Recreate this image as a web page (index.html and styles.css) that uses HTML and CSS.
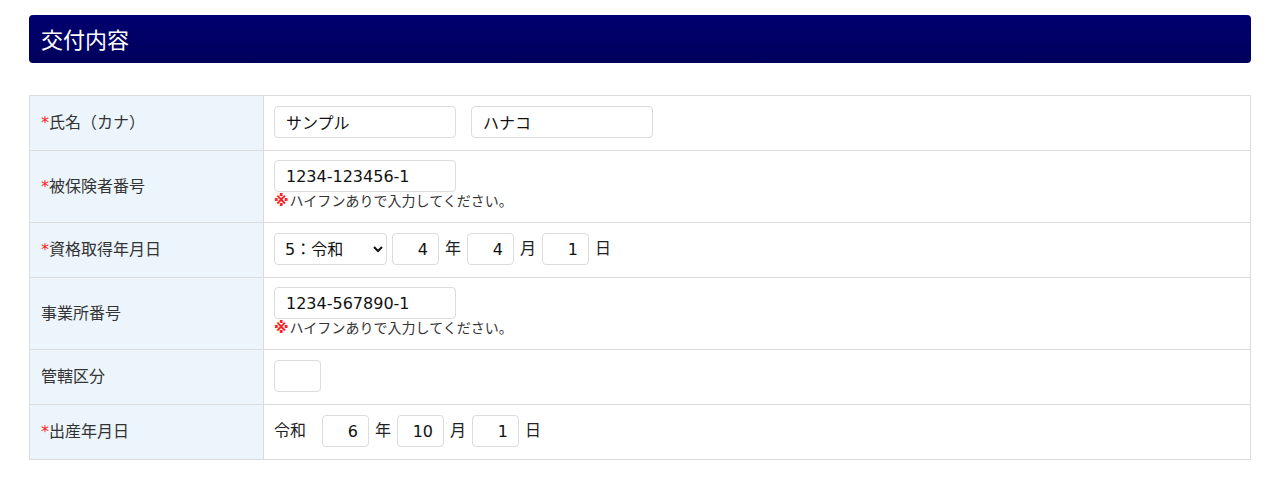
FILE: index.html
```html
<!DOCTYPE html>
<html lang="ja">
<head>
  <meta charset="UTF-8">
  <meta name="viewport" content="width=device-width, initial-scale=1.0">
  <title>交付内容</title>
  <link rel="stylesheet" href="styles.css">
</head>
<body>
  <div class="page">
    <h2 class="section-title">交付内容</h2>

    <table class="form-table">
      <tr>
        <th><span class="req">*</span>氏名（カナ）</th>
        <td>
          <div class="field-row">
            <input type="text" class="text-input" value="サンプル">
            <input type="text" class="text-input name-last" value="ハナコ">
          </div>
        </td>
      </tr>
      <tr>
        <th><span class="req">*</span>被保険者番号</th>
        <td>
          <input type="text" class="text-input" value="1234-123456-1">
          <p class="note"><span class="mark">※</span>ハイフンありで入力してください。</p>
        </td>
      </tr>
      <tr>
        <th><span class="req">*</span>資格取得年月日</th>
        <td>
          <div class="field-row">
            <select class="era-select">
              <option>5：令和</option>
            </select>
            <input type="text" class="num-input" value="4">
            <span class="unit">年</span>
            <input type="text" class="num-input" value="4">
            <span class="unit">月</span>
            <input type="text" class="num-input" value="1">
            <span class="unit">日</span>
          </div>
        </td>
      </tr>
      <tr>
        <th>事業所番号</th>
        <td>
          <input type="text" class="text-input" value="1234-567890-1">
          <p class="note"><span class="mark">※</span>ハイフンありで入力してください。</p>
        </td>
      </tr>
      <tr>
        <th>管轄区分</th>
        <td>
          <input type="text" class="num-input">
        </td>
      </tr>
      <tr>
        <th><span class="req">*</span>出産年月日</th>
        <td>
          <div class="field-row">
            <span class="era">令和</span>
            <input type="text" class="num-input" value="6">
            <span class="unit">年</span>
            <input type="text" class="num-input" value="10">
            <span class="unit">月</span>
            <input type="text" class="num-input" value="1">
            <span class="unit">日</span>
          </div>
        </td>
      </tr>
    </table>
  </div>
</body>
</html>
```

FILE: styles.css
```css
body {
  margin: 0;
  padding: 0;
  background: #fff;
  font-family: "DejaVu Sans", "Noto Sans CJK JP", sans-serif;
  color: #333;
}
.page {
  padding: 15px 29px 18px;
}
.section-title {
  margin: 0 0 32px;
  height: 48px;
  padding: 0 12px 2px;
  box-sizing: border-box;
  display: flex;
  align-items: center;
  font-size: 22px;
  font-weight: normal;
  color: #fff;
  background: linear-gradient(#000070, #00005c);
  border-radius: 4px;
}
.form-table {
  width: 100%;
  border-collapse: collapse;
  border: 1px solid #dcdcdc;
}
.form-table th,
.form-table td {
  border: 1px solid #dcdcdc;
  padding: 9px 10px 11px;
  vertical-align: middle;
  height: 34px;
}
.form-table th {
  width: 212px;
  padding: 8px 10px 12px 11px;
  text-align: left;
  font-size: 16px;
  font-weight: normal;
  color: #333;
  background: #edf5fc;
}
.req {
  color: #ff2020;
}
.field-row {
  display: flex;
  align-items: center;
  gap: 5px;
}
input, select {
  font-family: inherit;
  font-size: 16px;
  color: #111;
  box-sizing: border-box;
  height: 32px;
  border: 1px solid #dcdcdc;
  border-radius: 4px;
  background: #fff;
}
.text-input {
  display: block;
  width: 182px;
  padding: 0 11px;
}
.name-last {
  margin-left: 10px;
}
.era-select {
  width: 113px;
  padding: 0 6px;
}
.num-input {
  display: block;
  width: 47px;
  padding: 0 10px;
  text-align: right;
}
.unit {
  font-size: 16px;
  color: #222;
  margin: 0 1px;
  position: relative;
  top: -2px;
}
.era {
  font-size: 16px;
  color: #222;
  margin-right: 11px;
  position: relative;
  top: -2px;
}
.note {
  margin: 0;
  font-size: 14px;
  line-height: 19px;
  color: #333;
}
.mark {
  color: #ff2020;
  font-size: 15px;
  font-weight: bold;
  margin-right: 1px;
}
```
